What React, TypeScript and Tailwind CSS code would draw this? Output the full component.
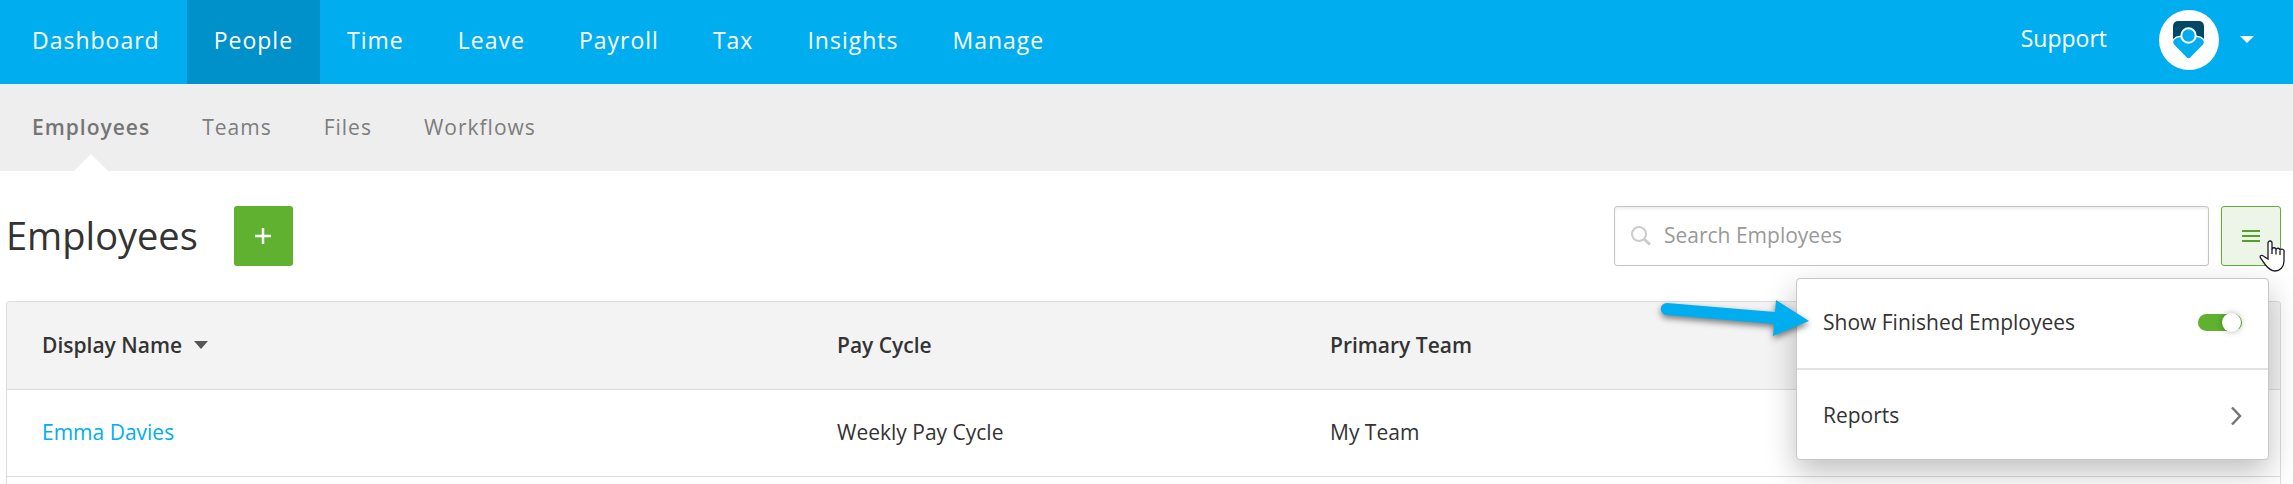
import React, { useState } from 'react';

const mainNav = ['Dashboard', 'People', 'Time', 'Leave', 'Payroll', 'Tax', 'Insights', 'Manage'];
const subNav = ['Employees', 'Teams', 'Files', 'Workflows'];

const employees = [
  { name: 'Emma Davies', payCycle: 'Weekly Pay Cycle', team: 'My Team' },
  { name: '', payCycle: '', team: '' },
];

const Avatar: React.FC = () => (
  <svg viewBox="0 0 60 60" className="w-[60px] h-[60px]" aria-hidden="true">
    <circle cx="30" cy="30" r="30" fill="#fff" />
    <path d="M14 29V16a5 5 0 0 1 5-5h21a5 5 0 0 1 5 5v13z" fill="#004866" />
    <path
      d="M15 35.500a4.600 4.600 0 0 1 0-6.500c2.500-2.500 6-3 9.500-1.500h10c3.500-1.500 7-1 9.500 1.500a4.600 4.600 0 0 1 0 6.500L32 47.800a3.600 3.600 0 0 1-5 0z"
      fill="#00aef0"
      stroke="#fff"
      strokeWidth="1.500"
    />
    <circle cx="29.500" cy="25.500" r="7.200" fill="#00aef0" stroke="#fff" strokeWidth="2" />
  </svg>
);

const TopBar: React.FC = () => (
  <header className="flex h-[84px] items-stretch justify-between bg-[#00aef0] pl-[5px] pr-[39px] text-[23px] text-white">
    <nav className="flex" aria-label="Main">
      {mainNav.map((item) => (
        <a
          key={item}
          href="#"
          className={`flex items-center px-[27px] pb-1 tracking-[1px] font-medium ${item === 'People' ? 'bg-[#0090ca]' : ''}`}
        >
          {item}
        </a>
      ))}
    </nav>
    <div className="flex items-center pb-1">
      <a href="#" className="mr-[52px] pb-1">Support</a>
      <button type="button" aria-label="Account" className="flex items-center gap-[21px]">
        <Avatar />
        <svg viewBox="0 0 14 8" className="w-3.5 h-2" fill="#fff" aria-hidden="true">
          <path d="M0 0h14L7 7z" />
        </svg>
      </button>
    </div>
  </header>
);

const SubBar: React.FC = () => (
  <nav className="flex h-[87px] bg-[#eee] pl-1.5 text-[21px] text-[#7d7d7d]" aria-label="People">
    {subNav.map((item) => (
      <a key={item} href="#" className="relative flex items-center px-[26px] tracking-[1px]">
        <span className={item === 'Employees' ? 'font-semibold text-[#757575]' : ''}>{item}</span>
        {item === 'Employees' && (
          <svg viewBox="0 0 34 17" className="absolute bottom-0 left-1/2 w-[34px] h-[17px] -translate-x-1/2" fill="#fff" aria-hidden="true">
            <path d="M0 17L17 0l17 17z" />
          </svg>
        )}
      </a>
    ))}
  </nav>
);

const OptionsMenu: React.FC = () => {
  const [showFinished, setShowFinished] = useState(true);

  return (
    <div className="absolute right-3 top-[72px] z-10 w-[473px] rounded-sm border border-[#c8c8c8] bg-white shadow-[0_12px_30px_rgba(0,0,0,0.25)]">
      <label className="flex h-[89px] cursor-pointer items-center justify-between px-[26px] pb-0.5">
        Show Finished Employees
        <span className="relative flex">
          <input
            type="checkbox"
            checked={showFinished}
            onChange={(e) => setShowFinished(e.target.checked)}
            className="peer h-[17px] w-11 appearance-none rounded-full bg-[#bbb] checked:bg-[#5fb12f]"
          />
          <span className="absolute left-0 top-[-1px] size-[19px] rounded-full bg-white shadow-[0_0_6px_rgba(0,0,0,0.3)] peer-checked:left-6" />
        </span>
      </label>
      <a href="#" className="flex h-[91px] items-center justify-between border-t-2 border-[#e2e2e2] px-[26px] pt-0.5">
        Reports
        <svg viewBox="0 0 12 20" className="w-3 h-5" fill="none" stroke="#757575" strokeWidth="2.500" aria-hidden="true">
          <path d="M2 1.500l8 8.500-8 8.500" />
        </svg>
      </a>

      {/* Callout arrow */}
      <svg viewBox="0 0 160 50" className="absolute -left-[141px] top-[17px] w-40 h-[50px] drop-shadow-[0_3px_3px_rgba(0,0,0,0.5)]" fill="#00aef0" aria-hidden="true">
        <path d="M11 7l108 9 1-12 33 21-36 15 1-12L10.500 19A6 6 0 0 1 11 7z" />
      </svg>
    </div>
  );
};

const PointerCursor: React.FC = () => (
  <svg viewBox="0 0 26 34" className="pointer-events-none absolute right-[-4px] top-[33px] z-20 w-[26px] h-[34px]" aria-hidden="true">
    <path
      d="M9 20V4a2 2 0 0 1 4 0v6.500a2 2 0 0 1 4 .5 2 2 0 0 1 4 .5 2 2 0 0 1 4 1.500v9c0 6-4 10-9 10-4 0-7-3-9.500-6L1.500 19c-1-2 .5-3 2-2.500L9 20z"
      fill="#fff"
      stroke="#1b1b2b"
      strokeWidth="1.300"
    />
    <path d="M13 10v5M17 11v4.500M21 12v4" stroke="#1b1b2b" strokeWidth="1.300" />
  </svg>
);

const App: React.FC = () => (
  <div className="bg-white font-['Open_Sans','Noto_Sans',sans-serif] text-[21px] text-[#333]">
    <TopBar />
    <SubBar />

    <main className="pl-1.5 pr-3 pt-[35px]">
      <div className="flex h-[60px] items-center">
        <h1 className="pb-0.5 text-[38px]">Employees</h1>
        <button type="button" aria-label="Add employee" className="ml-9 flex h-[60px] w-[59px] items-center justify-center rounded-[3px] bg-[#5fb12f]">
          <svg viewBox="0 0 16 16" className="size-4" stroke="#fff" strokeWidth="2.500" aria-hidden="true">
            <path d="M0 8h16M8 0v16" />
          </svg>
        </button>

        <div className="relative ml-auto flex gap-3">
          <label className="flex h-[60px] w-[595px] items-center gap-[13px] rounded-[3px] border border-[#c4c4c4] px-4 shadow-[inset_0_2px_3px_rgba(0,0,0,0.07)]">
            <svg viewBox="0 0 20 20" className="size-5" fill="none" stroke="#ccc" aria-hidden="true">
              <circle cx="8" cy="8" r="7" strokeWidth="2" />
              <path d="M13 13l6 5.500" strokeWidth="3" />
            </svg>
            <input type="search" aria-label="Search Employees" placeholder="Search Employees" className="min-w-0 flex-1 bg-transparent outline-none placeholder:text-[#999]" />
          </label>
          <button type="button" aria-label="Options" className="flex size-[60px] items-center justify-center rounded-[3px] border border-[#5fb12f] bg-[#edf5e8]">
            <svg viewBox="0 0 18 12" className="w-[18px] h-3" stroke="#55a02a" strokeWidth="2" aria-hidden="true">
              <path d="M0 1h18M0 6h18M0 11h18" />
            </svg>
          </button>
          <OptionsMenu />
          <PointerCursor />
        </div>
      </div>

      <div className="mt-[35px] h-[183px] overflow-hidden rounded-t-[4px] border border-b-0 border-[#dcdcdc]">
        <table className="w-full table-fixed text-left">
          <thead className="bg-[#f3f3f3]">
            <tr className="h-[87px] border-b border-[#dcdcdc]">
              <th className="w-[795px] px-[35px] font-semibold">
                <button type="button" className="flex items-center gap-3">
                  Display Name
                  <svg viewBox="0 0 14 8" className="w-3.5 h-2" fill="#555" aria-hidden="true">
                    <path d="M0 0h14L7 8z" />
                  </svg>
                </button>
              </th>
              <th className="w-[493px] px-[35px] font-semibold">Pay Cycle</th>
              <th className="px-[35px] font-semibold">Primary Team</th>
            </tr>
          </thead>
          <tbody>
            {employees.map((employee, idx) => (
              <tr key={idx} className="h-[87px] border-b border-[#dcdcdc]">
                <td className="px-[35px]">
                  <a href="#" className="text-[#00aef0]">{employee.name}</a>
                </td>
                <td className="px-[35px]">{employee.payCycle}</td>
                <td className="px-[35px]">{employee.team}</td>
              </tr>
            ))}
          </tbody>
        </table>
      </div>
    </main>
  </div>
);

export default App;
